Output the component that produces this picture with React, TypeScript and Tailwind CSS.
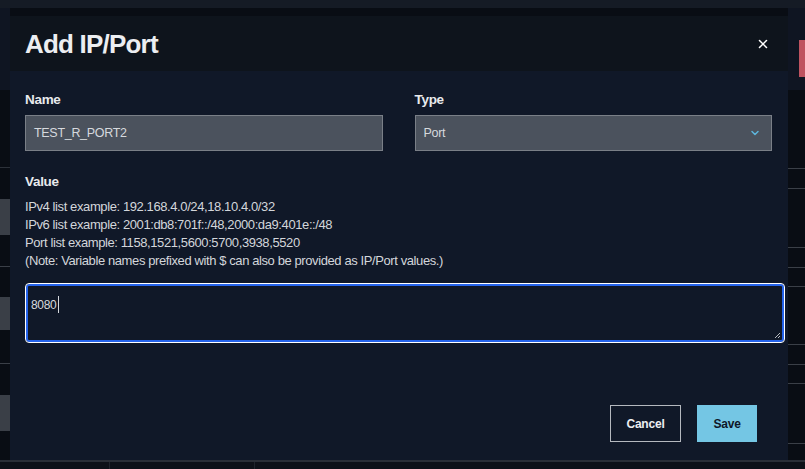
import { X, ChevronDown } from 'lucide-react'

const font = { fontFamily: '"Liberation Sans Narrow", "Arial Narrow", "Liberation Sans", Arial, sans-serif' }

const helpLines = [
  'IPv4 list example: 192.168.4.0/24,18.10.4.0/32',
  'IPv6 list example: 2001:db8:701f::/48,2000:da9:401e::/48',
  'Port list example: 1158,1521,5600:5700,3938,5520',
  '(Note: Variable names prefixed with $ can also be provided as IP/Port values.)',
]

const labelClass = 'text-[13.5px] font-bold leading-[18px] tracking-[-0.3px] text-[#e8eaed]'
const selectClass =
  'flex h-[36px] items-center border border-[#7a7f87] bg-[#4b525d] text-[12.5px] tracking-[-0.3px] text-[#d6d9de]'

function Backdrop() {
  return (
    <div className="flex h-full flex-col">
      <div className="h-[8px] bg-[#151b25]" />
      <div className="flex flex-1">
        <div className="flex w-[10px] flex-col">
          <div className="h-[82px] bg-[#0f1522]" />
          <div className="h-[77px]" />
          <div className="h-px bg-[#2c3139]" />
          <div className="h-[31px]" />
          <div className="h-[36px] bg-[#3a3f47]" />
          <div className="h-[31px]" />
          <div className="h-px bg-[#3a3f47]" />
          <div className="h-[30px]" />
          <div className="h-[33px] bg-[#3a3f47]" />
          <div className="h-[33px]" />
          <div className="h-px bg-[#3a3f47]" />
          <div className="h-[31px]" />
          <div className="h-[36px] bg-[#3a3f47]" />
        </div>
        <div className="flex-1" />
        <div className="flex w-[17px] flex-col">
          <div className="flex h-[82px] bg-[#0f1522] pt-[32px]">
            <div className="ml-auto h-[37px] w-[6px] bg-[#bf5360]" />
          </div>
          <div className="h-[78px]" />
          <div className="h-px bg-[#3a3f47]" />
          <div className="h-[19px]" />
          <div className="h-px bg-[#3a3f47]" />
          <div className="h-[58px]" />
          <div className="h-px bg-[#3a3f47]" />
          <div className="h-[19px]" />
          <div className="h-px bg-[#3a3f47]" />
          <div className="h-[18px]" />
          <div className="h-px bg-[#3a3f47]" />
          <div className="h-[57px]" />
          <div className="h-px bg-[#3a3f47]" />
          <div className="h-[19px]" />
          <div className="h-px bg-[#3a3f47]" />
          <div className="h-[18px]" />
          <div className="h-px bg-[#3a3f47]" />
          <div className="h-[59px]" />
          <div className="h-px bg-[#3a3f47]" />
        </div>
      </div>
      <div className="flex h-[9px] border-t-2 border-[#2a2f37] bg-[#0d1118]">
        <div className="w-[110px] border-r border-[#1f242c]" />
        <div className="w-[145px] border-r border-[#1f242c]" />
      </div>
    </div>
  )
}

export default function App() {
  return (
    <div className="relative h-[469px] w-[805px] overflow-hidden bg-[#090d14]" style={font}>
      <Backdrop />

      <div className="absolute left-[10px] top-[16px] flex h-[444px] w-[778px] flex-col bg-[#101828]">
        <div className="flex h-[55px] items-center justify-between bg-[#0e141c] pl-[15px] pr-[18px]">
          <h1 className="text-[26px] font-bold leading-none tracking-[-0.8px] text-[#eceef1]">Add IP/Port</h1>
          <X size={14} strokeWidth={2.6} className="text-white" />
        </div>

        <div className="flex flex-1 flex-col pl-[15px] pr-[3px] pt-[20px] pb-[18px]">
          <div className="grid w-[747px] grid-cols-2 gap-8">
            <div className="flex flex-col gap-[6px]">
              <label className={labelClass}>Name</label>
              <div className={`${selectClass} px-[8px]`}>TEST_R_PORT2</div>
            </div>
            <div className="flex flex-col gap-[6px]">
              <label className={labelClass}>Type</label>
              <div className={`${selectClass} justify-between pl-[8px] pr-[10px]`}>
                <span>Port</span>
                <ChevronDown size={12} strokeWidth={3} className="text-[#5db4db]" />
              </div>
            </div>
          </div>

          <label className={`${labelClass} mt-[22px]`}>Value</label>
          <div className="mt-[7px] flex flex-col text-[13px] leading-[18px] tracking-[-0.4px] text-[#d3d6db]">
            {helpLines.map((line) => (
              <p key={line}>{line}</p>
            ))}
          </div>

          <div className="relative mt-[13px] h-[60px] rounded-[4px] border border-white px-[5px] py-[8px] text-[12px] leading-[18px] tracking-[-0.3px] text-[#d6d9de] shadow-[inset_0_0_0_2px_#2563eb]">
            <span>8080</span>
            <span className="ml-px inline-block h-[17px] w-px translate-y-[4px] bg-[#d6d9de]" />
            <svg width="7" height="7" viewBox="0 0 7 7" className="absolute bottom-[3px] right-[3px]">
              <path d="M6 1L1 6M6 4L4 6" stroke="#b8bcc2" strokeWidth="1" />
            </svg>
          </div>

          <div className="mt-auto flex justify-end gap-4 pr-[28px]">
            <button className="h-[37px] w-[71px] border border-[#b5b9bf] text-[12px] font-bold tracking-[-0.2px] text-[#eceef1]">
              Cancel
            </button>
            <button className="h-[37px] w-[60px] bg-[#74c6e4] text-[12px] font-bold tracking-[-0.2px] text-[#0f1729]">
              Save
            </button>
          </div>
        </div>
      </div>
    </div>
  )
}
